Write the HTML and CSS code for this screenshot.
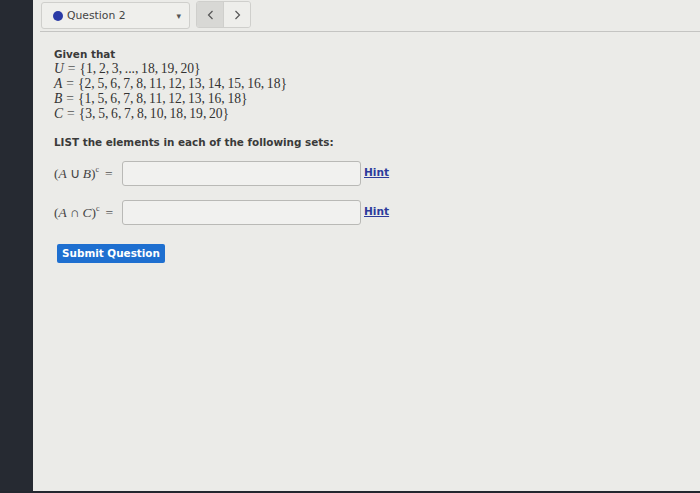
FILE: index.html
```html
<!DOCTYPE html>
<html>
<head>
<meta charset="utf-8">
<link rel="stylesheet" href="styles.css">
</head>
<body>
<div class="frame">
  <div class="side"></div>
  <div class="main">
    <div class="topbar">
      <div class="qselect">
        <span class="dot"></span>
        <span class="qlabel">Question 2</span>
        <span class="caret">&#9662;</span>
      </div>
      <div class="nav">
        <span class="navbtn prev"><svg width="7" height="10" viewBox="0 0 7 10"><polyline points="5.5,1 1.5,5 5.5,9" fill="none" stroke="#555" stroke-width="1.2"/></svg></span>
        <span class="navbtn next"><svg width="7" height="10" viewBox="0 0 7 10"><polyline points="1.5,1 5.5,5 1.5,9" fill="none" stroke="#555" stroke-width="1.2"/></svg></span>
      </div>
    </div>
    <div class="content">
      <div class="given">Given that</div>
      <div class="math">
        <div class="mline"><i>U</i><span class="op">=</span>{1,&#8201;2,&#8201;3,&#8201;...,&#8201;18,&#8201;19,&#8201;20}</div>
        <div class="mline"><i>A</i><span class="op">=</span>{2,&#8201;5,&#8201;6,&#8201;7,&#8201;8,&#8201;11,&#8201;12,&#8201;13,&#8201;14,&#8201;15,&#8201;16,&#8201;18}</div>
        <div class="mline"><i>B</i><span class="op">=</span>{1,&#8201;5,&#8201;6,&#8201;7,&#8201;8,&#8201;11,&#8201;12,&#8201;13,&#8201;16,&#8201;18}</div>
        <div class="mline"><i>C</i><span class="op">=</span>{3,&#8201;5,&#8201;6,&#8201;7,&#8201;8,&#8201;10,&#8201;18,&#8201;19,&#8201;20}</div>
      </div>
      <div class="prompt">LIST the elements in each of the following sets:</div>
      <div class="row">
        <span class="lhs">(<i>A</i><span class="bin">&cup;</span><i>B</i>)<sup>c</sup><span class="op">=</span></span>
        <span class="field"></span>
        <a class="hint">Hint</a>
      </div>
      <div class="row">
        <span class="lhs">(<i>A</i><span class="bin">&cap;</span><i>C</i>)<sup>c</sup><span class="op">=</span></span>
        <span class="field"></span>
        <a class="hint">Hint</a>
      </div>
      <div class="submit">Submit Question</div>
    </div>
  </div>
</div>
</body>
</html>
```
FILE: styles.css
```css
html, body {
  margin: 0;
  padding: 0;
  background: #23272f;
}
.frame {
  display: flex;
  width: 700px;
  height: 491px;
}
.side {
  width: 33px;
  background: #262a32;
  flex: none;
}
.main {
  flex: 1;
  background: #ebebe8;
  font-family: "DejaVu Sans", Verdana, sans-serif;
  color: #333;
}
.topbar {
  display: flex;
  align-items: flex-start;
  gap: 6px;
  margin-left: 7px;
  padding: 2px 0 0 1px;
  height: 29px;
  border-bottom: 1px solid #c4c4c2;
}
.qselect {
  box-sizing: border-box;
  width: 149px;
  height: 27px;
  border: 1px solid #cfcfcc;
  border-radius: 3px;
  background: #efefec;
  display: flex;
  align-items: center;
  padding-left: 11px;
}
.dot {
  width: 10px;
  height: 10px;
  border-radius: 50%;
  background: #2a3aa6;
  margin-right: 4px;
}
.qlabel {
  font-size: 10.8px;
  color: #444;
}
.caret {
  margin-left: auto;
  margin-right: 8px;
  font-size: 9px;
  color: #555;
}
.nav {
  display: flex;
  box-sizing: border-box;
  width: 55px;
  height: 27px;
  margin-top: -1px;
  border: 1px solid #cfcfcc;
  border-radius: 3px;
  overflow: hidden;
}
.navbtn {
  flex: 1;
  display: flex;
  align-items: center;
  justify-content: center;
}
.prev {
  background: #d8d8d5;
  border-right: 1px solid #cfcfcc;
}
.next {
  background: #eeeeeb;
}
.content {
  padding: 16px 0 0 21px;
}
.given, .prompt {
  font-weight: bold;
  font-size: 10.4px;
  color: #3a3a3a;
}
.math {
  font-family: "Liberation Serif", "Times New Roman", serif;
  font-size: 13.6px;
  color: #333;
  line-height: 15px;
  margin-top: 1px;
}
.mline i, .lhs i {
  font-style: italic;
}
.op {
  color: #555;
  margin: 0 4px;
}
.bin {
  margin: 0 3px;
}
.prompt {
  margin-top: 15px;
}
.row {
  display: flex;
  align-items: center;
  margin-top: 13px;
  height: 25px;
}
.row + .row {
  margin-top: 14px;
}
.lhs {
  font-family: "Liberation Serif", "Times New Roman", serif;
  font-size: 13.5px;
  color: #444;
  width: 68px;
  flex: none;
  white-space: nowrap;
}
.lhs sup {
  font-size: 8px;
  vertical-align: 6px;
  line-height: 0;
}
.lhs .op {
  margin: 0 0 0 6px;
}
.field {
  box-sizing: border-box;
  width: 239px;
  height: 25px;
  border: 1px solid #b9b9b6;
  border-radius: 3px;
  background: #f1f1ef;
  flex: none;
}
.hint {
  margin-left: 3px;
  margin-top: -4px;
  font-size: 10.6px;
  font-weight: bold;
  color: #2d3b9c;
  text-decoration: underline;
}
.submit {
  display: inline-block;
  margin: 19px 0 0 3px;
  width: 108px;
  height: 19px;
  line-height: 19px;
  text-align: center;
  background: #1e6fd0;
  color: #fff;
  font-size: 10.4px;
  font-weight: bold;
  border-radius: 2px;
}
```
